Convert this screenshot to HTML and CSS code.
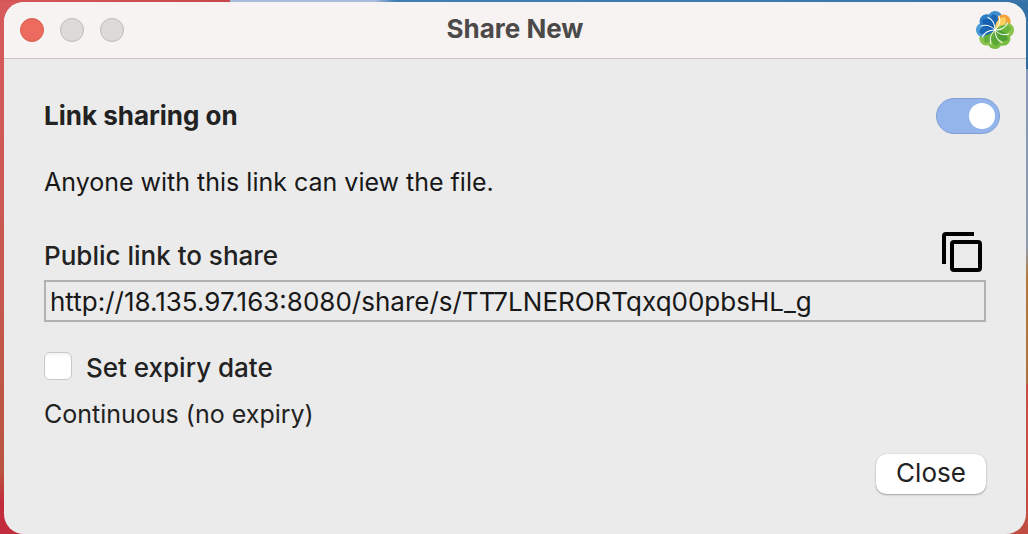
FILE: index.html
```html
<!DOCTYPE html>
<html lang="en">
<head>
<meta charset="utf-8">
<meta name="viewport" content="width=device-width, initial-scale=1">
<title>Share New</title>
<link rel="stylesheet" href="styles.css">
</head>
<body class="desktop">
<main class="window">
  <header class="titlebar">
    <div class="lights">
      <button class="light light-close" type="button" aria-label="Close window"></button>
      <button class="light" type="button" aria-label="Minimize window"></button>
      <button class="light" type="button" aria-label="Zoom window"></button>
    </div>
    <h1 class="title">Share New</h1>
    <svg class="logo" viewBox="-19 -19 38 38" aria-hidden="true">
      <defs>
        <path id="petal" d="M0 0C-6 -4 -8 -9 -7 -13C-6 -17 -3 -19 0 -19C4 -19 7 -16 7 -13C7 -8 4 -4 0 0Z"/>
        <path id="fold" d="M0 0C-5 -5 -7 -11 -2 -16C5 -14 5 -6 0 0Z"/>
        <path id="vein" d="M0 0C4 -4 6 -8 4 -14" fill="none" stroke="#fff" stroke-width="1" stroke-linecap="round"/>
      </defs>
      <use href="#petal" fill="#3f8fd0"/>
      <use href="#petal" fill="#f4a23c" transform="rotate(45)"/>
      <use href="#petal" fill="#8bc34a" transform="rotate(90)"/>
      <use href="#petal" fill="#7bbd42" transform="rotate(135)"/>
      <use href="#petal" fill="#7bbd42" transform="rotate(180)"/>
      <use href="#petal" fill="#8bc34a" transform="rotate(225)"/>
      <use href="#petal" fill="#4a9bd6" transform="rotate(270)"/>
      <use href="#petal" fill="#2f7fc6" transform="rotate(315)"/>
      <use href="#fold" fill="#1c66b4"/>
      <use href="#fold" fill="#fbcf62" transform="rotate(45)"/>
      <use href="#fold" fill="#6ab53e" transform="rotate(90)"/>
      <use href="#fold" fill="#4f9f35" transform="rotate(135)"/>
      <use href="#fold" fill="#58a836" transform="rotate(180)"/>
      <use href="#fold" fill="#62ae3a" transform="rotate(225)"/>
      <use href="#fold" fill="#1b69b5" transform="rotate(270)"/>
      <use href="#fold" fill="#1560b0" transform="rotate(315)"/>
      <use href="#vein"/><use href="#vein" transform="rotate(45)"/><use href="#vein" transform="rotate(90)"/><use href="#vein" transform="rotate(135)"/>
      <use href="#vein" transform="rotate(180)"/><use href="#vein" transform="rotate(225)"/><use href="#vein" transform="rotate(270)"/><use href="#vein" transform="rotate(315)"/>
    </svg>
  </header>
  <form class="content">
    <div class="row sharing">
      <label class="strong" for="sharing">Link sharing on</label>
      <input class="switch" id="sharing" type="checkbox" role="switch" checked>
    </div>
    <p class="hint">Anyone with this link can view the file.</p>
    <div class="row link-head">
      <label class="medium" for="link">Public link to share</label>
      <button class="copy" type="button" aria-label="Copy link">
        <svg class="copy-icon" viewBox="0 0 40 40" aria-hidden="true">
          <path d="M2 32V4Q2 2 4 2H32M10 12Q10 10 12 10H36Q38 10 38 12V36Q38 38 36 38H12Q10 38 10 36Z" fill="none" stroke="#000" stroke-width="4"/>
        </svg>
      </button>
    </div>
    <input class="url" id="link" type="text" readonly value="http://18.135.97.163:8080/share/s/TT7LNERORTqxq00pbsHL_g">
    <div class="expiry">
      <input class="check" id="expiry" type="checkbox">
      <label class="medium" for="expiry">Set expiry date</label>
    </div>
    <p class="status">Continuous (no expiry)</p>
    <div class="actions"><button class="close" type="button">Close</button></div>
  </form>
</main>
</body>
</html>
```

FILE: styles.css
```css
* { box-sizing: border-box; }

.desktop {
  margin: 0;
  min-height: 100vh;
  padding: 2px 2px 0 4px;
  display: flex;
  color: #222;
  font: 26px/32px Inter, "Liberation Sans", sans-serif;
  background:
    linear-gradient(90deg, #d65658, #c94746 230px, #a9bbdd 230px, #a9bbdd 375px, #3f7fb4 395px, #3a74a8) top / 100% 2px no-repeat,
    linear-gradient(#3572a8, #2f6a9f 13%, #8498b8 13%, #8f9db0 46%, #b5793a 52%, #b0703c 72%, #c65148 72%, #c14d40) right / 50% 100% no-repeat,
    linear-gradient(#d95a5c, #c85850 50%, #b9563f 88%, #c32c3c 94%, #c32c3c) left / 50% 100% no-repeat;
}

.window {
  flex: 1;
  display: flex;
  flex-direction: column;
  overflow: hidden;
  border-radius: 20px;
  background: #ebebeb;
}

.titlebar {
  display: grid;
  grid-template-columns: 1fr auto 1fr;
  align-items: center;
  height: 57px;
  padding: 0 12px;
  border-bottom: 1px solid #c6c3c2;
  background: #f7f3f2;
}

.lights { display: flex; gap: 16px; padding-left: 4px; }

.light {
  width: 24px;
  height: 24px;
  padding: 0;
  border: 1px solid #bdb9b8;
  border-radius: 50%;
  background: #dddad9;
}

.light-close { border-color: #d75a4e; background: #ed6a5e; }

.title { margin: 0; padding-bottom: 2px; color: #4b4a49; font-size: 26px; font-weight: 700; }

.logo { width: 38px; height: 38px; justify-self: end; }

.content {
  flex: 1;
  padding: 39px 40px;
}

.row { display: flex; align-items: center; justify-content: space-between; }
.sharing { margin-right: -14px; }
.strong { font-weight: 700; }
.medium { font-weight: 500; }

.switch {
  appearance: none;
  display: flex;
  justify-content: flex-end;
  align-items: center;
  width: 64px;
  height: 36px;
  margin: 0;
  padding: 0 4px;
  border: 1px solid #7f9fd4;
  border-radius: 18px;
  background: #94b5eb;
}

.switch::before {
  content: "";
  width: 26px;
  height: 26px;
  border-radius: 50%;
  background: #fff;
}

.hint { margin: 32px 0 0; color: #181818; font-size: 25px; }
.link-head { align-items: flex-end; margin-top: 34px; padding-right: 4px; }

.copy { display: flex; padding: 0; border: 0; background: none; }
.copy-icon { width: 40px; height: 40px; }

.url {
  display: block;
  width: 100%;
  height: 42px;
  margin-top: 8px;
  padding: 0 4px;
  border: 2px solid #b1b1b1;
  border-radius: 0;
  background: #ebebeb;
  color: #181818;
  font: inherit;
}

.expiry { display: flex; align-items: flex-start; gap: 14px; margin-top: 30px; }

.check {
  appearance: none;
  width: 28px;
  height: 28px;
  margin: 0;
  border: 1px solid #c8c8c8;
  border-radius: 6px;
  background: linear-gradient(#f4f4f4, #fff 20%);
}

.status { margin: 14px 0 0; font-size: 25px; }
.actions { display: flex; justify-content: flex-end; margin-top: 24px; }

.close {
  width: 110px;
  height: 40px;
  padding: 0 0 2px;
  border: 0;
  border-radius: 10px;
  background: #fff;
  box-shadow: 0 1px 2px rgba(0, 0, 0, .3), 0 0 1px rgba(0, 0, 0, .25);
  color: #222;
  font: inherit;
}
```
